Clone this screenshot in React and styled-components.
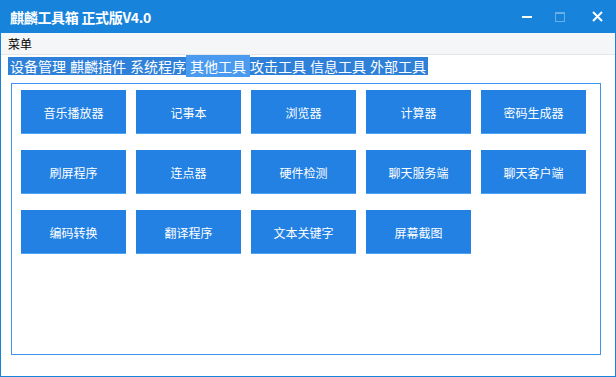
import React from "react";
import styled, { createGlobalStyle } from "styled-components";

const GlobalStyle = createGlobalStyle`
  html, body {
    margin: 0;
    padding: 0;
    background: #ffffff;
  }
  body {
    font-family: "Noto Sans CJK SC", "Noto Sans", sans-serif;
  }
`;

const Window = styled.div`
  width: 616px;
  height: 377px;
  box-sizing: border-box;
  border: 1px solid #1783db;
  border-top: none;
  display: flex;
  flex-direction: column;
  background: #fff;
  overflow: hidden;
`;

const TitleBar = styled.div`
  height: 33px;
  margin: 0 -1px;
  background: #1783db;
  display: flex;
  align-items: center;
  padding-left: 10px;
`;

const Title = styled.div`
  color: #fff;
  font-size: 14px;
  font-weight: bold;
  flex: 1;
  letter-spacing: -0.3px;
`;

const Controls = styled.div`
  display: flex;
  align-items: center;
  height: 100%;
`;

const CtrlBtn = styled.div`
  width: ${({ $w }) => $w}px;
  height: 100%;
  display: flex;
  align-items: center;
  justify-content: center;
  opacity: ${({ $dim }) => ($dim ? 0.35 : 1)};
`;

const MenuBar = styled.div`
  height: 21px;
  background: #f5f6f7;
  border-bottom: 1px solid #e4e6e8;
  display: flex;
  align-items: center;
  padding-left: 7px;
  font-size: 12px;
  color: #000;
`;

const TabStrip = styled.div`
  margin: 2px 0 0 7px;
  height: 18px;
  display: flex;
  align-self: flex-start;
  background: #2e80d8;
`;

const Tab = styled.div`
  width: ${({ $active }) => ($active ? 64 : 60)}px;
  height: ${({ $active }) => ($active ? 22 : 18)}px;
  margin: ${({ $active }) => ($active ? "-2px -2px" : "0")};
  background: ${({ $active }) => ($active ? "#4a9bf0" : "transparent")};
  color: #fff;
  font-size: 14px;
  display: flex;
  align-items: center;
  justify-content: center;
  line-height: 1;
  position: relative;
`;

const Panel = styled.div`
  margin: 8px 0 0 10px;
  width: 590px;
  height: 272px;
  box-sizing: border-box;
  border: 1px solid #3e92f0;
  padding: 6px 9px;
  display: grid;
  grid-template-columns: repeat(5, 105px);
  grid-auto-rows: 44px;
  column-gap: 10px;
  row-gap: 16px;
  align-content: start;
`;

const ToolButton = styled.div`
  background: #2281e3;
  border-bottom: 1px solid #4ea4f4;
  box-sizing: border-box;
  color: #fff;
  font-size: 12px;
  display: flex;
  align-items: center;
  justify-content: center;
  padding-top: 1px;
`;

const tabs = ["设备管理", "麒麟插件", "系统程序", "其他工具", "攻击工具", "信息工具", "外部工具"];

const tools = [
  "音乐播放器",
  "记事本",
  "浏览器",
  "计算器",
  "密码生成器",
  "刷屏程序",
  "连点器",
  "硬件检测",
  "聊天服务端",
  "聊天客户端",
  "编码转换",
  "翻译程序",
  "文本关键字",
  "屏幕截图",
];

export default function App() {
  return (
    <>
      <GlobalStyle />
      <Window>
        <TitleBar>
          <Title>麒麟工具箱 正式版V4.0</Title>
          <Controls>
            <CtrlBtn $w={30}>
              <svg width="10" height="10" viewBox="0 0 10 10">
                <rect x="0" y="4" width="10" height="2" fill="#fff" />
              </svg>
            </CtrlBtn>
            <CtrlBtn $w={36} $dim>
              <svg width="10" height="10" viewBox="0 0 10 10">
                <rect x="0.5" y="0.5" width="9" height="9" fill="none" stroke="#fff" />
                <rect x="0" y="0" width="10" height="2" fill="#fff" />
              </svg>
            </CtrlBtn>
            <CtrlBtn $w={38}>
              <svg width="11" height="11" viewBox="0 0 11 11">
                <path d="M1 1 L10 10 M10 1 L1 10" stroke="#fff" strokeWidth="2" />
              </svg>
            </CtrlBtn>
          </Controls>
        </TitleBar>
        <MenuBar>菜单</MenuBar>
        <TabStrip>
          {tabs.map(t => (
            <Tab key={t} $active={t === "其他工具"}>
              {t}
            </Tab>
          ))}
        </TabStrip>
        <Panel>
          {tools.map(t => (
            <ToolButton key={t}>{t}</ToolButton>
          ))}
        </Panel>
      </Window>
    </>
  );
}
